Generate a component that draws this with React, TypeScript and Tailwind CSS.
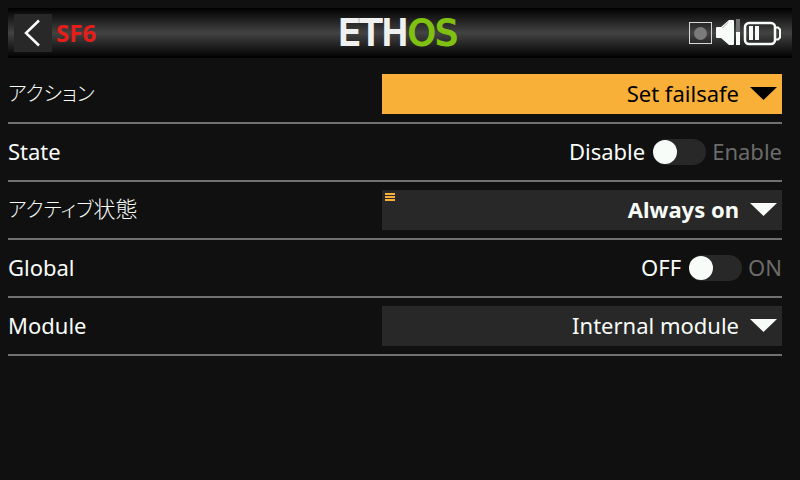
import React, { useId, useState } from "react";

const FONT = "font-['Noto_Sans','Noto_Sans_CJK_JP',sans-serif]";

function StatusIcons() {
  return (
    <svg width="94" height="28" viewBox="0 0 94 28" role="img" aria-label="Recording off, volume, battery">
      <rect x="1.5" y="3.5" width="22" height="21" fill="none" stroke="#d6d8d6" />
      <circle cx="12.5" cy="14.500" r="6.5" fill="#7b7b7b" />
      <path d="M28 9q0-1 1-1h4l8-7h4q1 0 1 1v23q0 1-1 1h-4l-8-7h-4q-1 0-1-1z" fill="#f8fcf8" />
      <path d="M34.5 9L40 3.500" stroke="#a8aaa8" fill="none" />
      <rect x="48" y="0" width="4" height="13" fill="#6f706f" />
      <rect x="48" y="13" width="4" height="13" fill="#f8fcf8" />
      <rect x="57" y="4" width="30" height="21" rx="4" fill="none" stroke="#f8fcf8" strokeWidth="2.500" />
      <rect x="61" y="7" width="4" height="14" fill="#f8fcf8" />
      <rect x="67" y="7" width="4" height="14" fill="#f8fcf8" />
      <path d="M88 8.500h2l2 2v8l-2 2h-2" fill="none" stroke="#f8fcf8" strokeWidth="2" />
    </svg>
  );
}

function Header() {
  return (
    <header className="grid h-[50px] grid-cols-[1fr_auto_1fr] items-center bg-[linear-gradient(#000000,#424342_50%,#000000)] pr-2.5 pl-1.5">
      <div className="flex items-center gap-1">
        <button type="button" aria-label="Back" className="flex size-[38px] items-center justify-center bg-[#282828]">
          <svg width="38" height="38" viewBox="0 0 38 38" fill="none" stroke="#f8fcf8" strokeWidth="2.500">
            <path d="M25 6.500L12 19L25 31.500" />
          </svg>
        </button>
        <h1 className="text-2xl font-bold text-[#e61e19]">SF6</h1>
      </div>
      <div className="font-['DejaVu_Sans',sans-serif] text-[35px] leading-10 text-[#f0f0f0] [-webkit-text-stroke:2px_currentColor]">
        ETH<span className="text-[#7fc010]">OS</span>
      </div>
      <div className="flex justify-end">
        <StatusIcons />
      </div>
    </header>
  );
}

function Row({ label, htmlFor, children }: { label: React.ReactNode; htmlFor: string; children: React.ReactNode }) {
  return (
    <div className="flex h-[58px] items-center border-b-2 border-[#707070]">
      <label htmlFor={htmlFor} className="flex-1 pb-0.5 whitespace-nowrap">
        {label}
      </label>
      {children}
    </div>
  );
}

function Kana({ children }: { children: string }) {
  return <span className="text-[20px] font-light [font-feature-settings:'palt']">{children}</span>;
}

type SelectProps = { label: React.ReactNode; options: string[]; active?: boolean; bold?: boolean; menu?: boolean };

function SelectRow({ label, options, active, bold, menu }: SelectProps) {
  const id = useId();
  return (
    <Row label={label} htmlFor={id}>
      <div className="relative h-10 w-[51.7%]">
        <select
          id={id}
          className={
            "size-full appearance-none rounded-none pr-[43px] pb-0.5 pl-6 [text-align-last:right] outline-none " +
            (active ? "bg-[#f8b038] text-black " : "bg-[#282828] text-[#f8fcf8] ") +
            (bold ? "font-bold" : "font-normal")
          }
        >
          {options.map((o) => (
            <option key={o}>{o}</option>
          ))}
        </select>
        {menu && (
          <svg className="pointer-events-none absolute top-[3px] left-[3px]" width="10" height="8" fill="#f8b038">
            <path d="M0 0h10v2H0zM0 3h10v2H0zM0 6h10v2H0z" />
          </svg>
        )}
        <svg
          className={"pointer-events-none absolute top-[13px] right-[5px] " + (active ? "fill-black" : "fill-[#f8fcf8]")}
          width="27"
          height="13"
        >
          <path d="M0 0h27L13.500 13z" />
        </svg>
      </div>
    </Row>
  );
}

function SwitchRow({ label, off, on }: { label: string; off: string; on: string }) {
  const id = useId();
  const [checked, setChecked] = useState(false);
  return (
    <Row label={label} htmlFor={id}>
      <div className="flex items-center">
        <span className={"pb-0.5 " + (checked ? "text-[#6b6b6b]" : "text-[#f8fcf8]")}>{off}</span>
        <input
          id={id}
          type="checkbox"
          role="switch"
          checked={checked}
          onChange={(e) => setChecked(e.target.checked)}
          className="mr-1.5 ml-2 flex h-[26px] w-[53px] appearance-none items-center rounded-full bg-[#282828] before:size-6 before:rounded-full before:bg-[#f8fcf8] checked:justify-end"
        />
        <span className={"pb-0.5 " + (checked ? "text-[#f8fcf8]" : "text-[#6b6b6b]")}>{on}</span>
      </div>
    </Row>
  );
}

export default function App() {
  return (
    <div className={"min-h-screen bg-[#101010] p-2 text-[22px] leading-8 text-[#f8fcf8] " + FONT}>
      <Header />
      <main className="mt-2 mr-2.5">
        <SelectRow label={<Kana>アクション</Kana>} options={["Set failsafe"]} active />
        <SwitchRow label="State" off="Disable" on="Enable" />
        <SelectRow
          label={
            <>
              <Kana>アクティブ</Kana>
              <span className="font-light">状態</span>
            </>
          }
          options={["Always on"]}
          bold
          menu
        />
        <SwitchRow label="Global" off="OFF" on="ON" />
        <SelectRow label="Module" options={["Internal module"]} />
      </main>
    </div>
  );
}
